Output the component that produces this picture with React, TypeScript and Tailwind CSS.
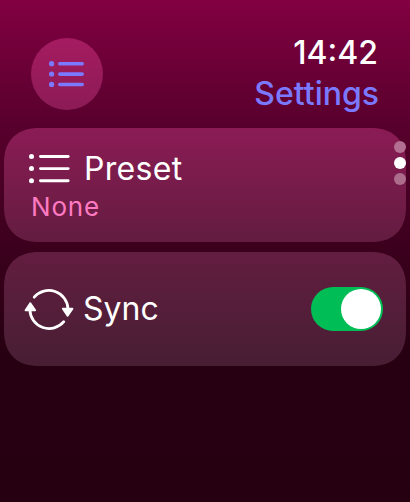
import React from "react";

function ListGlyph({ className, bold }: { className: string; bold?: boolean }) {
  return bold ? (
    <svg className={className} viewBox="0 0 36 28" fill="currentColor">
      {[4, 14.3, 24.7].map((y) => (
        <g key={y}>
          <circle cx="2.6" cy={y - 0.3} r="2.6" />
          <rect x="9" y={y - 2} width="26" height="3.6" rx="1.8" />
        </g>
      ))}
    </svg>
  ) : (
    <svg className={className} viewBox="0 0 42 32" fill="currentColor">
      {[3.5, 15.6, 27.8].map((y) => (
        <g key={y}>
          <circle cx="2.5" cy={y} r="2.5" />
          <rect x="10" y={y - 1.45} width="30.6" height="2.9" rx="1.45" />
        </g>
      ))}
    </svg>
  );
}

function SyncGlyph() {
  return (
    <svg className="h-[50px] w-[50px]" viewBox="24 284 50 50" fill="none" stroke="white" strokeWidth="2.8" strokeLinecap="round">
      <path d="M34.2 297.2A19.2 19.2 0 0 1 68 309" />
      <path d="M63.8 321.7A19.2 19.2 0 0 1 29.9 310" />
      <path d="M62.9 308.7H72.4L67.6 315.8Z" fill="white" strokeWidth="2" strokeLinejoin="round" />
      <path d="M25.6 310.3H35.1L30.3 303.2Z" fill="white" strokeWidth="2" strokeLinejoin="round" />
    </svg>
  );
}

export default function App() {
  return (
    <div className="relative h-[502px] w-[410px] overflow-hidden bg-[linear-gradient(180deg,#820041_0px,#58002d_125px,#3c001d_245px,#270012_350px,#260011_502px)] font-['Inter',sans-serif] text-white">
      <header className="flex h-32 justify-between pt-[38px] pr-[31px] pl-[31px]">
        <div className="flex size-[72px] items-center justify-center rounded-full bg-linear-to-b from-[#a51b61] to-[#8c1b56] text-[#7b79ff]">
          <ListGlyph bold className="h-7 w-9" />
        </div>
        <div className="flex flex-col items-end font-medium">
          <time className="-mt-[5px] mr-px h-10 text-[32px] leading-10">14:42</time>
          <h1 className="h-11 text-[32px] leading-[42px] text-[#7b79ff]">Settings</h1>
        </div>
      </header>
      <main className="flex flex-col gap-2.5 px-1">
        <section className="h-[114px] rounded-[36px] bg-linear-to-b from-[#8b1b55] to-[#631c40] pt-[21px] pl-[25px] [corner-shape:superellipse(1.25)]">
          <div className="flex h-10 items-center">
            <ListGlyph className="h-8 w-[42px]" />
            <span className="ml-[13px] text-[32px] tracking-[0.3px]">Preset</span>
          </div>
          <p className="ml-0.5 h-9 text-[26px] leading-9 tracking-[0.8px] text-[#ff7ac1]">None</p>
        </section>
        <section className="flex h-[114px] items-center rounded-[36px] bg-linear-to-b from-[#631d40] to-[#471e33] pr-[23px] pl-5 [corner-shape:superellipse(1.25)]">
          <SyncGlyph />
          <span className="ml-[9px] text-[32px]">Sync</span>
          <button role="switch" aria-checked="true" aria-label="Sync" className="ml-auto flex h-11 w-[72px] items-center justify-end rounded-full bg-[#00bd55] pr-0.5">
            <span className="size-10 rounded-full bg-white" />
          </button>
        </section>
      </main>
      <nav className="absolute top-[141px] right-1 flex flex-col gap-1">
        <i className="size-3 rounded-full bg-[#b36f91]" />
        <i className="size-3 rounded-full bg-white" />
        <i className="size-3 rounded-full bg-[#ac6d8c]" />
      </nav>
    </div>
  );
}
